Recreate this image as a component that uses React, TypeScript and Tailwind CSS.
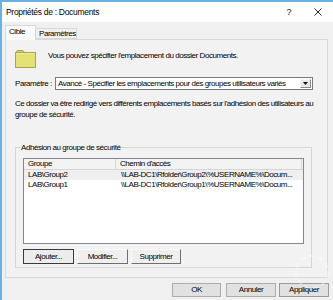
export default function App() {
  return (
    <div className="relative w-[333px] h-[300px] overflow-hidden bg-[#f0f0f0] border-t-2 border-l-2 border-[#69b1e4] font-['Liberation_Sans',Arial,sans-serif] text-[8px] leading-[11px] tracking-[-0.45px] text-black">
      {/* Title bar */}
      <div className="flex h-[20px] items-center bg-white pl-[4px]">
        <span className="text-[8.5px] tracking-[-0.3px]">Propriétés de : Documents</span>
        <span className="ml-auto mr-[23px] text-[9px] text-[#222]">?</span>
        <svg width="8" height="8" viewBox="0 0 8 8" className="mr-[11px]">
          <path d="M0.5 0.5 L7.5 7.5 M7.5 0.5 L0.5 7.5" stroke="#222" strokeWidth="1" />
        </svg>
      </div>

      {/* Tabs */}
      <div className="flex h-[17px] items-end pl-[3px]">
        <div className="relative z-10 -mb-px h-[15px] w-[31px] border border-b-0 border-[#d9d9d9] bg-[#fafafa] pl-[3px]">
          Cible
        </div>
        <div className="h-[11px] w-[41px] border border-l-0 border-[#d9d9d9] bg-[#f0f0f0] pl-[3px] leading-[10px]">
          Paramètres
        </div>
      </div>

      {/* Tab page */}
      <div className="ml-[3px] flex h-[239px] w-[323px] flex-col border border-[#d9d9d9] bg-[#f2f2f2]">
        <div className="ml-[9px] mt-[10px] flex h-[18px] items-start">
          <svg width="21" height="18" viewBox="0 0 21 18">
            <path d="M1.5 3 V1.5 Q1.5 0.5 2.5 0.5 H8 L9.5 2.5" fill="#d9d565" stroke="#a8a453" />
            <rect x="0.5" y="2.5" width="20" height="15" fill="#e4e173" stroke="#a8a453" />
            <path d="M1.5 3.5 H19.5" stroke="#f0ee9c" />
          </svg>
          <span className="ml-[12px] leading-[12px]">Vous pouvez spécifier l'emplacement du dossier Documents.</span>
        </div>

        <div className="ml-[9px] mt-[9px] flex h-[13px] items-center">
          <span className="w-[40px]">Paramètre :</span>
          <div className="flex h-[13px] w-[258px] items-center border border-[#7a7a7a] bg-white">
            <span className="flex-1 whitespace-nowrap pl-[2px]">
              Avancé - Spécifier les emplacements pour des groupes utilisateurs variés
            </span>
            <div className="mr-px flex h-[9px] w-[11px] items-center justify-center border border-t-[#f4f4f4] border-l-[#f4f4f4] border-r-[#8a8a8a] border-b-[#8a8a8a] bg-[#e8e8e8]">
              <svg width="5" height="3" viewBox="0 0 5 3">
                <path d="M0 0 H5 L2.5 3 Z" fill="#111" />
              </svg>
            </div>
          </div>
        </div>

        <p className="ml-[9px] mt-[8px] whitespace-nowrap">
          Ce dossier va être redirigé vers différents emplacements basés sur l'adhésion des utilisateurs au
          <br />
          groupe de sécurité.
        </p>

        {/* Group box */}
        <div className="relative ml-[9px] mt-[27px] flex h-[121px] w-[297px] flex-col border border-[#d5d5d5]">
          <span className="absolute -top-[6px] left-[4px] bg-[#f2f2f2] px-px">Adhésion au groupe de sécurité</span>

          <div className="ml-[7px] mt-[10px] flex h-[86px] w-[281px] flex-col border border-[#828790] bg-white">
            <div className="flex h-[11px] bg-[#f3f3f3] leading-[10px]">
              <div className="w-[92px] border-r border-b border-[#d5d5d5] pl-[4px]">Groupe</div>
              <div className="w-[186px] border-r border-b border-[#d5d5d5] pl-[4px]">Chemin d'accès</div>
              <div className="flex-1 border-b border-[#d5d5d5]" />
            </div>
            <div className="flex h-[10px] bg-[#efefef] leading-[10px]">
              <div className="w-[92px] pl-[4px]">LAB\Group2</div>
              <div className="pl-[5px] whitespace-nowrap">\\LAB-DC1\Rfolder\Group2\%USERNAME%\Docum...</div>
            </div>
            <div className="flex h-[10px] leading-[10px]">
              <div className="w-[92px] pl-[4px]">LAB\Group1</div>
              <div className="pl-[5px] whitespace-nowrap">\\LAB-DC1\Rfolder\Group1\%USERNAME%\Docum...</div>
            </div>
          </div>

          <div className="ml-[7px] mt-[5px] flex h-[15px]">
            <button className="h-[15px] w-[51px] border border-[#3a3a3a] bg-[#ececec] leading-[12px]">Ajouter...</button>
            <button className="ml-[3px] h-[15px] w-[51px] border border-t-[#fafafa] border-l-[#fafafa] border-r-[#6e6e6e] border-b-[#6e6e6e] bg-[#efefef] leading-[12px]">Modifier...</button>
            <button className="ml-[3px] h-[15px] w-[50px] border border-t-[#fafafa] border-l-[#fafafa] border-r-[#6e6e6e] border-b-[#6e6e6e] bg-[#efefef] leading-[12px]">Supprimer</button>
          </div>
        </div>
      </div>

      {/* Dialog buttons */}
      <div className="mt-[5px] flex h-[14px] justify-end pr-[4px]">
        <button className="h-[14px] w-[49px] border border-[#adadad] bg-[#e1e1e1] leading-[12px]">OK</button>
        <button className="ml-[5px] h-[14px] w-[50px] border border-[#adadad] bg-[#e1e1e1] leading-[12px]">Annuler</button>
        <button className="ml-[3px] h-[14px] w-[50px] border border-[#9a9a9a] bg-[#e1e1e1] leading-[12px]">Appliquer</button>
      </div>

      {/* faint watermark */}
      <svg width="40" height="40" viewBox="0 0 40 40" className="pointer-events-none absolute left-[290px] top-[250px] opacity-40">
        <circle cx="20" cy="20" r="16" fill="none" stroke="#ffffff" strokeWidth="2" strokeDasharray="6 3" />
      </svg>
    </div>
  );
}
